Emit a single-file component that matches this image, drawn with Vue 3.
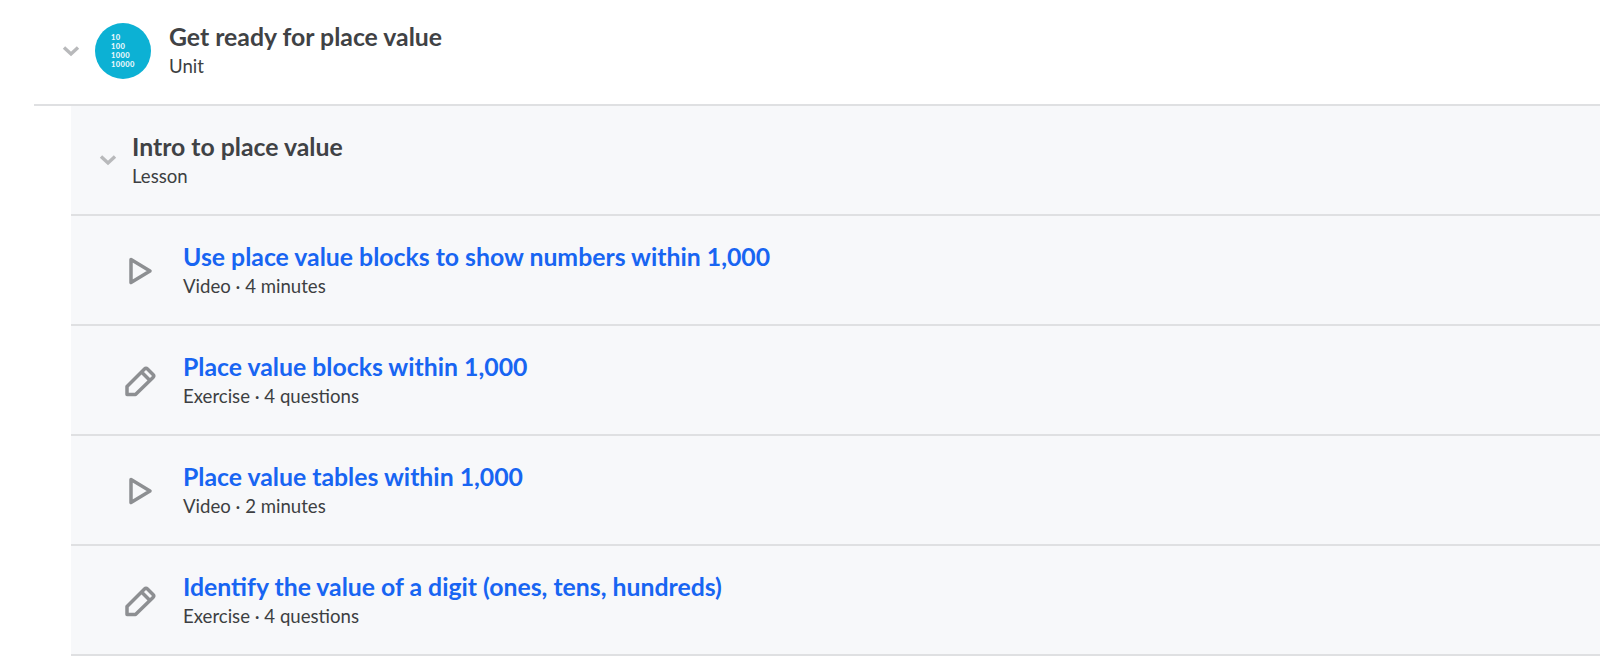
<script setup>
const items = [
  { type: 'video', title: 'Use place value blocks to show numbers within 1,000', meta: 'Video · 4 minutes' },
  { type: 'exercise', title: 'Place value blocks within 1,000', meta: 'Exercise · 4 questions' },
  { type: 'video', title: 'Place value tables within 1,000', meta: 'Video · 2 minutes' },
  { type: 'exercise', title: 'Identify the value of a digit (ones, tens, hundreds)', meta: 'Exercise · 4 questions' },
]
</script>

<template>
  <div class="page">
    <div class="row unit">
      <svg class="chevron" width="18" height="12" viewBox="0 0 18 12">
        <path d="M2 2.5 L9 9 L16 2.5" />
      </svg>
      <div class="badge">
        <span>10</span>
        <span>100</span>
        <span>1000</span>
        <span>10000</span>
      </div>
      <div class="text">
        <div class="title">Get ready for place value</div>
        <div class="meta">Unit</div>
      </div>
    </div>
    <div class="lesson">
      <div class="row lesson-head">
        <svg class="chevron" width="18" height="12" viewBox="0 0 18 12">
          <path d="M2 2.5 L9 9 L16 2.5" />
        </svg>
        <div class="text">
          <div class="title">Intro to place value</div>
          <div class="meta">Lesson</div>
        </div>
      </div>
      <div v-for="item in items" :key="item.title" class="row item">
        <div class="item-icon">
          <svg v-if="item.type === 'video'" width="32" height="32" viewBox="0 0 32 32">
            <path d="M7 4.5 L26 16 L7 27.5 Z" />
          </svg>
          <svg v-else width="32" height="32" viewBox="0 0 32 32">
            <path d="M3 29.5 L3 21.5 L20.5 4 Q22 2.5 23.5 4 L29 9.5 Q30.5 11 29 12.5 L11.5 29.5 Z M17.5 7 L26 15.5" />
          </svg>
        </div>
        <div class="text">
          <div class="title link">{{ item.title }}</div>
          <div class="meta">{{ item.meta }}</div>
        </div>
      </div>
    </div>
  </div>
</template>

<style scoped>
.page {
  padding-left: 34px;
  font-family: Lato, "Open Sans", sans-serif;
  color: #3b3e40;
  background: #fff;
  height: 659px;
  box-sizing: border-box;
}
.row {
  display: flex;
  align-items: center;
  box-sizing: border-box;
  height: 110px;
  padding-bottom: 2px;
  border-bottom: 2px solid #dfe0e2;
}
.unit {
  height: 106px;
  padding-left: 28px;
}
.unit .chevron {
  margin-right: 15px;
}
.unit .text {
  margin-bottom: 4px;
}
.chevron {
  flex: none;
}
.chevron path {
  fill: none;
  stroke: #b8b9bb;
  stroke-width: 3.4;
}
.badge {
  flex: none;
  width: 56px;
  height: 56px;
  border-radius: 50%;
  background: #0cb1d4;
  margin-right: 18px;
  padding: 10px 0 0 16px;
  box-sizing: border-box;
  display: flex;
  flex-direction: column;
  color: #e8f7fb;
  font-size: 7.5px;
  font-weight: 900;
  line-height: 9px;
  letter-spacing: 0.4px;
}
.lesson {
  margin-left: 37px;
  background: #f7f8fa;
}
.lesson-head {
  padding-left: 28px;
}
.lesson-head .chevron {
  margin: 2px 15px 0 0;
}
.item-icon {
  flex: none;
  width: 112px;
  margin-top: 4px;
  padding-left: 53px;
  box-sizing: border-box;
  display: flex;
}
.item-icon path {
  fill: none;
  stroke: #8d8f92;
  stroke-width: 3.5;
  stroke-linejoin: round;
}
.title {
  font-size: 24.8px;
  font-weight: 700;
  line-height: 32px;
  margin-top: 1px;
  color: #404245;
}
.link {
  color: #1865f2;
}
.meta {
  font-size: 18.6px;
  line-height: 24px;
  margin-top: 1px;
  color: #3d3f42;
}
</style>
